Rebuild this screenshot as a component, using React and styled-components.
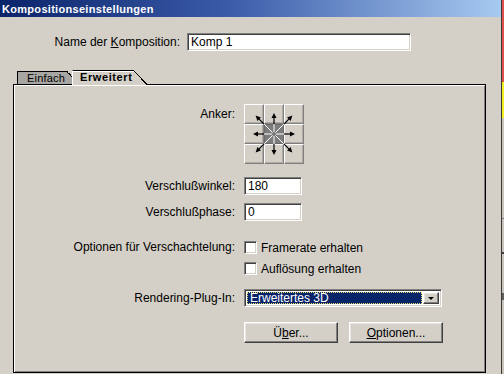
import React from 'react';
import styled, { createGlobalStyle } from 'styled-components';

const GlobalStyle = createGlobalStyle`
  html, body {
    margin: 0;
    padding: 0;
    background: #d4d0c8;
    font-family: "Liberation Sans", Arial, sans-serif;
    font-size: 12px;
    color: #000;
  }
`;

const Screen = styled.div`
  display: flex;
  width: 504px;
  height: 374px;
  overflow: hidden;
`;

const Dialog = styled.div`
  width: 501px;
  display: flex;
  flex-direction: column;
  background: #d4d0c8;
`;

const Edge = styled.div`
  width: 2px;
  border-left: 1px solid #3a3a3a;
  background: linear-gradient(
    to bottom,
    #e0504a 0,
    #e0504a 82px,
    #f2f020 82px,
    #f2f020 118px,
    #c8c4bc 118px,
    #c8c4bc 218px,
    #808080 218px,
    #808080 219px,
    #c8c4bc 219px,
    #c8c4bc 252px,
    #404040 252px,
    #404040 254px,
    #c8c4bc 254px,
    #c8c4bc 293px,
    #606060 293px,
    #606060 300px,
    #c8c4bc 300px
  );
`;

const TitleBar = styled.div`
  height: 17px;
  display: flex;
  align-items: center;
  padding-left: 2px;
  background: linear-gradient(to right, #0a246a 0%, #3a5aa8 45%, #a6caf0 100%);
  color: #fff;
  font-weight: bold;
  font-size: 11px;
  letter-spacing: 0.3px;
`;

const FieldRow = styled.div`
  display: grid;
  grid-template-columns: ${(p) => p.$label}px ${(p) => p.$field}px;
  column-gap: ${(p) => p.$gap}px;
  align-items: ${(p) => p.$align || 'center'};
  margin-top: ${(p) => p.$top || 0}px;
  padding-left: ${(p) => p.$indent || 0}px;
`;

const Label = styled.div`
  text-align: right;
  white-space: nowrap;
  line-height: 14px;
  padding-top: ${(p) => p.$pad || 0}px;
`;

const sunken = `
  border-style: solid;
  border-width: 1px;
  border-color: #808080 #fff #fff #808080;
  box-shadow: inset 1px 1px 0 #404040, inset -1px -1px 0 #d4d0c8;
`;

const TextInput = styled.div`
  ${sunken}
  box-sizing: border-box;
  width: ${(p) => p.$w}px;
  height: 18px;
  background: #fff;
  padding: 1px 0 0 3px;
  line-height: 15px;
`;

const TabStrip = styled.div`
  display: flex;
  align-items: flex-end;
  height: 14px;
  margin-top: 19px;
  padding-left: 17px;
  position: relative;
  z-index: 1;
`;

const Tab = styled.div`
  position: relative;
  box-sizing: border-box;
  height: ${(p) => (p.$active ? 15 : 13)}px;
  width: ${(p) => p.$w}px;
  margin-right: ${(p) => p.$corner}px;
  margin-left: ${(p) => p.$shift || 0}px;
  margin-bottom: ${(p) => (p.$active ? -1 : 0)}px;
  padding-left: ${(p) => (p.$active ? 7 : 9)}px;
  background: ${(p) => (p.$active ? '#d4d0c8' : '#a8a6a2')};
  border-top: 1px solid #000;
  border-left: 1px solid ${(p) => (p.$active ? '#fff' : '#000')};
  box-shadow: ${(p) => (p.$active ? 'inset 0 1px 0 #fff' : 'none')};
  font-size: 11px;
  font-weight: ${(p) => (p.$active ? 'bold' : 'normal')};
  letter-spacing: ${(p) => (p.$active ? '0.6px' : '0.2px')};
  line-height: 12px;
  white-space: nowrap;
  z-index: ${(p) => (p.$active ? 2 : 1)};

  &::after {
    content: '';
    position: absolute;
    top: -1px;
    right: -${(p) => p.$corner}px;
    width: ${(p) => p.$corner}px;
    height: ${(p) => (p.$active ? 15 : 13)}px;
    background: linear-gradient(
      to top right,
      ${(p) => (p.$active ? '#d4d0c8' : '#a8a6a2')} 0,
      ${(p) => (p.$active ? '#d4d0c8' : '#a8a6a2')} calc(50% - 1px),
      #000 calc(50% - 1px),
      #000 50%,
      transparent 50%
    );
  }
`;

const Panel = styled.div`
  box-sizing: border-box;
  margin-left: 13px;
  width: 473px;
  height: 289px;
  border: 1px solid #000;
  box-shadow: inset 1px 1px 0 #fff, inset -1px -1px 0 #808080;
  padding-top: 19px;
  display: flex;
  flex-direction: column;
`;

const AnchorGrid = styled.div`
  position: relative;
  display: grid;
  grid-template-columns: repeat(3, 20px);
  grid-template-rows: repeat(3, 20px);
  width: 60px;
  height: 60px;
`;

const AnchorCell = styled.div`
  box-sizing: border-box;
  background: ${(p) => (p.$center ? '#7c7c7c' : '#d4d0c8')};
  border: 1px solid;
  border-color: ${(p) => (p.$center ? '#6a6a6a' : '#fff #808080 #808080 #fff')};
  box-shadow: ${(p) => (p.$center ? 'none' : 'inset -1px -1px 0 #b0aca4')};
`;

const ArrowLayer = styled.svg`
  position: absolute;
  inset: 0;
  pointer-events: none;
`;

const CheckList = styled.div`
  display: flex;
  flex-direction: column;
`;

const CheckRow = styled.div`
  display: flex;
  align-items: center;
  height: 21px;
  gap: 4px;
`;

const CheckBox = styled.div`
  ${sunken}
  box-sizing: border-box;
  width: 13px;
  height: 13px;
  background: #fff;
`;

const Select = styled.div`
  ${sunken}
  box-sizing: border-box;
  width: 198px;
  height: 18px;
  background: #fff;
  display: flex;
  align-items: stretch;
  padding: 2px;
  gap: 1px;
`;

const SelectValue = styled.div`
  flex: 1;
  background: #0a246a;
  color: #fff;
  outline: 1px dotted #e8e070;
  outline-offset: -1px;
  padding-left: 3px;
  line-height: 12px;
`;

const raised = `
  border-style: solid;
  border-width: 1px;
  border-color: #fff #404040 #404040 #fff;
  box-shadow: inset -1px -1px 0 #808080, inset 1px 1px 0 #e8e6e2;
`;

const DropButton = styled.div`
  ${raised}
  box-sizing: border-box;
  width: 16px;
  background: #d4d0c8;
  display: flex;
  align-items: center;
  justify-content: center;

  &::before {
    content: '';
    border-left: 3px solid transparent;
    border-right: 3px solid transparent;
    border-top: 3px solid #000;
  }
`;

const ButtonRow = styled.div`
  display: flex;
  gap: 11px;
`;

const Button = styled.div`
  ${raised}
  box-sizing: border-box;
  width: 94px;
  height: 21px;
  background: #d4d0c8;
  display: flex;
  align-items: center;
  justify-content: center;
`;

const Key = styled.span`
  text-decoration: underline;
`;

const directions = [
  [0, -1], [1, -1], [1, 0], [1, 1], [0, 1], [-1, 1], [-1, 0], [-1, -1],
];

function AnchorArrows() {
  return (
    <ArrowLayer width="60" height="60" viewBox="0 0 60 60">
      {directions.map(([dx, dy], i) => {
        const diag = dx !== 0 && dy !== 0;
        const len = Math.hypot(dx, dy);
        const ux = dx / len;
        const uy = dy / len;
        const edge = diag ? 14 : 10;
        const tip = diag ? 26 : 21;
        const c = 30;
        const px = -uy;
        const py = ux;
        const bx = c + ux * (tip - 5);
        const by = c + uy * (tip - 5);
        return (
          <g key={i}>
            <line x1={c + ux * 2} y1={c + uy * 2} x2={c + ux * edge} y2={c + uy * edge} stroke="#fff" strokeWidth="1" />
            <line x1={c + ux * edge} y1={c + uy * edge} x2={bx} y2={by} stroke="#000" strokeWidth="1.2" />
            <polygon
              points={`${c + ux * tip},${c + uy * tip} ${bx + px * 2.5},${by + py * 2.5} ${bx - px * 2.5},${by - py * 2.5}`}
              fill="#000"
            />
          </g>
        );
      })}
    </ArrowLayer>
  );
}

export default function App() {
  return (
    <>
      <GlobalStyle />
      <Screen>
        <Dialog>
          <TitleBar>Kompositionseinstellungen</TitleBar>

          <FieldRow $label={167} $field={224} $gap={7} $indent={13} $top={16}>
            <Label>
              Name der <Key>K</Key>omposition:
            </Label>
            <TextInput $w={224}>Komp 1</TextInput>
          </FieldRow>

          <TabStrip>
            <Tab $w={50} $corner={13}>Einfach</Tab>
            <Tab $active $w={62} $corner={14} $shift={-8}>Erweitert</Tab>
          </TabStrip>

          <Panel>
            <FieldRow $label={221} $field={200} $gap={9} $align="start">
              <Label $pad={3}>Anker:</Label>
              <AnchorGrid>
                {Array.from({ length: 9 }, (_, i) => (
                  <AnchorCell key={i} $center={i === 4} />
                ))}
                <AnchorArrows />
              </AnchorGrid>
            </FieldRow>

            <FieldRow $label={221} $field={200} $gap={9} $top={13}>
              <Label>Verschlußwinkel:</Label>
              <TextInput $w={58}>180</TextInput>
            </FieldRow>

            <FieldRow $label={221} $field={200} $gap={9} $top={8}>
              <Label>Verschlußphase:</Label>
              <TextInput $w={58}>0</TextInput>
            </FieldRow>

            <FieldRow $label={221} $field={200} $gap={9} $top={16} $align="start">
              <Label $pad={3}>Optionen für Verschachtelung:</Label>
              <CheckList>
                <CheckRow>
                  <CheckBox />
                  Framerate erhalten
                </CheckRow>
                <CheckRow>
                  <CheckBox />
                  Auflösung erhalten
                </CheckRow>
              </CheckList>
            </FieldRow>

            <FieldRow $label={221} $field={200} $gap={9} $top={10}>
              <Label>Rendering-Plug-In:</Label>
              <Select>
                <SelectValue>Erweitertes 3D</SelectValue>
                <DropButton />
              </Select>
            </FieldRow>

            <FieldRow $label={221} $field={205} $gap={9} $top={15}>
              <span />
              <ButtonRow>
                <Button>
                  Ü<Key>b</Key>er...
                </Button>
                <Button>
                  <Key>O</Key>ptionen...
                </Button>
              </ButtonRow>
            </FieldRow>
          </Panel>
        </Dialog>
        <Edge />
      </Screen>
    </>
  );
}
